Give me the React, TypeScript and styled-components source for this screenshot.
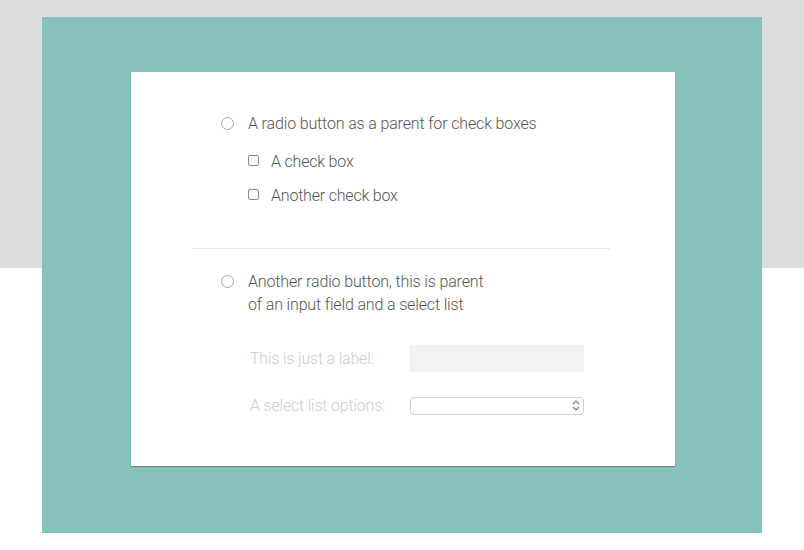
import React from 'react'
import styled, { createGlobalStyle } from 'styled-components'

const GlobalStyle = createGlobalStyle`
  html, body {
    margin: 0;
    padding: 0;
  }
  body {
    background: linear-gradient(#dddddd 0, #dddddd 268px, #ffffff 268px);
    font-family: Roboto, "Noto Sans", sans-serif;
    font-weight: 300;
    color: #555;
  }
`

const Page = styled.div`
  padding: 17px 42px;
  height: 550px;
  box-sizing: border-box;
`

const Panel = styled.div`
  background: #87c1bb;
  height: 516px;
  padding: 55px 0 0 89px;
  box-sizing: border-box;
`

const Card = styled.div`
  background: #fff;
  width: 544px;
  height: 394px;
  box-sizing: border-box;
  padding: 40px 65px 0 61px;
  box-shadow: 0 1px 1px rgba(0, 0, 0, 0.25);
`

const Section = styled.div`
  padding-left: 29px;
`

const RadioRow = styled.label`
  display: flex;
  align-items: flex-start;
  gap: 14px;
  font-size: 16px;
  line-height: 23px;
  color: #555;
  letter-spacing: -0.15px;
`

const Radio = styled.input.attrs({ type: 'radio' })`
  appearance: none;
  margin: 5px 0 0;
  width: 13px;
  height: 13px;
  flex: none;
  border: 1px solid #a8a8a8;
  border-radius: 50%;
  background: #fff;
`

const CheckList = styled.div`
  display: flex;
  flex-direction: column;
  gap: 12px;
  margin-top: 16px;
  padding-left: 27px;
`

const CheckRow = styled.label`
  display: flex;
  align-items: flex-start;
  gap: 12px;
  font-size: 16px;
  line-height: 22px;
  color: #555;
  letter-spacing: -0.2px;
`

const Checkbox = styled.input.attrs({ type: 'checkbox' })`
  appearance: none;
  margin: 4px 0 0;
  width: 11px;
  height: 11px;
  flex: none;
  border: 1px solid #8a8a8a;
  border-radius: 2px;
  background: #fff;
`

const Divider = styled.hr`
  border: none;
  border-top: 1px solid #e6e6e6;
  margin: 41px 0 21px;
`

const Fields = styled.div`
  display: grid;
  grid-template-columns: 160px 174px;
  row-gap: 24px;
  align-items: center;
  margin: 29px 0 0 58px;
`

const FieldLabel = styled.span`
  font-size: 16px;
  color: #cccccc;
  letter-spacing: -0.2px;
`

const TextBox = styled.div`
  height: 27px;
  background: #f2f2f2;
`

const SelectBox = styled.div`
  height: 18px;
  box-sizing: border-box;
  border: 1px solid #cfcfcf;
  border-radius: 4px;
  display: flex;
  justify-content: flex-end;
  align-items: center;
  padding-right: 3px;
`

export default function App() {
  return (
    <>
      <GlobalStyle />
      <Page>
        <Panel>
          <Card>
            <Section>
              <RadioRow>
                <Radio name="parent" />
                A radio button as a parent for check boxes
              </RadioRow>
              <CheckList>
                <CheckRow>
                  <Checkbox />
                  A check box
                </CheckRow>
                <CheckRow>
                  <Checkbox />
                  Another check box
                </CheckRow>
              </CheckList>
            </Section>
            <Divider />
            <Section>
              <RadioRow>
                <Radio name="parent" />
                <span>
                  Another radio button, this is parent
                  <br />
                  of an input field and a select list
                </span>
              </RadioRow>
            </Section>
            <Fields>
              <FieldLabel>This is just a label:</FieldLabel>
              <TextBox />
              <FieldLabel>A select list options:</FieldLabel>
              <SelectBox>
                <svg width="8" height="11" viewBox="0 0 8 11" fill="none" stroke="#777" strokeWidth="1.1">
                  <path d="M1 4 L4 1 L7 4" />
                  <path d="M1 7 L4 10 L7 7" />
                </svg>
              </SelectBox>
            </Fields>
          </Card>
        </Panel>
      </Page>
    </>
  )
}
